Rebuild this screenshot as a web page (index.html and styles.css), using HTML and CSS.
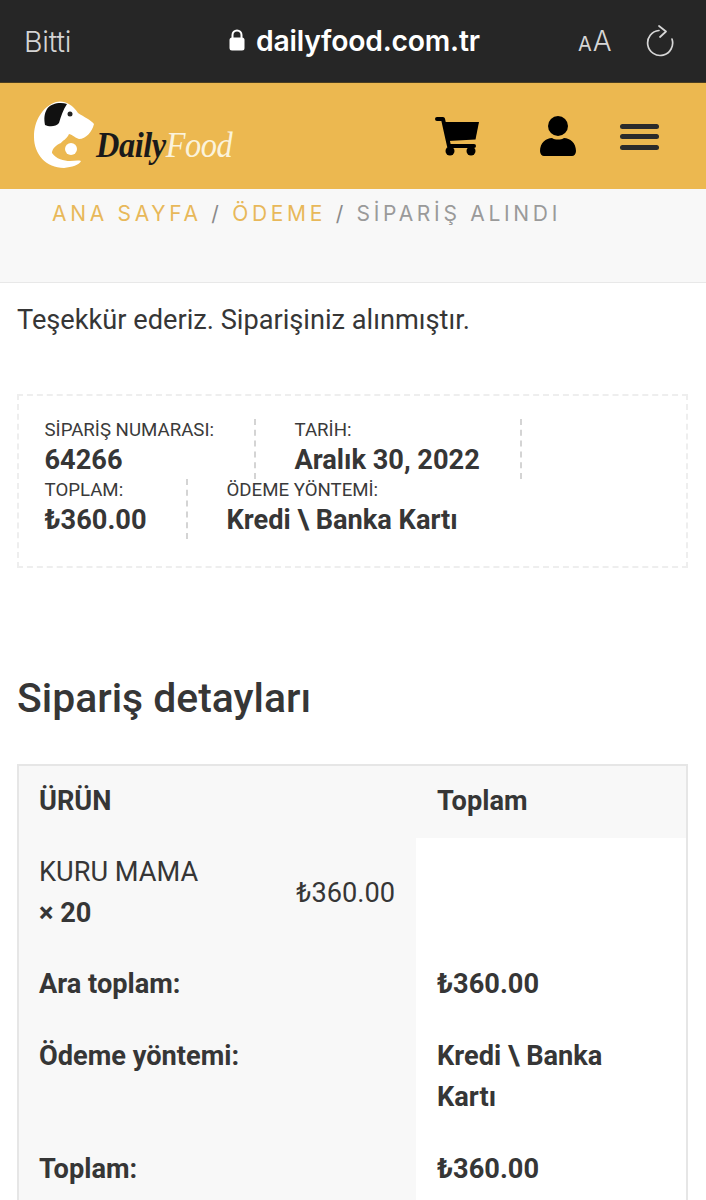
FILE: index.html
```html
<!DOCTYPE html>
<html lang="tr">
<head>
<meta charset="utf-8">
<title>DailyFood</title>
<link rel="stylesheet" href="styles.css">
</head>
<body>
<div class="browser-bar">
  <span class="done">Bitti</span>
  <div class="address">
    <svg class="lock" viewBox="0 0 16 22" width="16" height="22"><path d="M3.500 9V6a4.500 4.500 0 0 1 9 0v3" fill="none" stroke="#fff" stroke-width="2"/><rect x="0.500" y="8.500" width="15" height="13" rx="2.500" fill="#fff"/></svg>
    <span class="url">dailyfood.com.tr</span>
  </div>
  <div class="aa"><span class="aa-small">A</span><span class="aa-big">A</span></div>
  <svg class="reload" viewBox="0 0 28 32" width="28" height="32"><path d="M13 5.500A12.500 12.500 0 1 0 26 14" fill="none" stroke="#d6d6d6" stroke-width="1.700" stroke-linecap="round"/><path d="M13 1L20 6.500L14 12" fill="none" stroke="#d6d6d6" stroke-width="1.700" stroke-linecap="round" stroke-linejoin="round"/></svg>
</div>
<header class="site-header">
  <div class="logo">
    <svg class="logo-mark" viewBox="0 0 62 68" width="62" height="68">
      <path d="M22 1C30 -1 38 3 44 12C50 16 57 19 60 23C58 31 52 38 45 38C40 36 37 33 35 33C33 38 28 40 27 42C22 44 18 48 18 52C22 58 30 60 36 60C40 60 44 59 47 60C45 64 38 66 30 67C12 67 0 53 0 36C0 20 8 6 22 1Z" fill="#fff"/>
      <path d="M13 8C17 2 27 1 33 3C29 9 27 15 25 22C22 26 15 26 11 24C10 18 10 13 13 8Z" fill="#111"/>
      <circle cx="36" cy="13" r="2.500" fill="#222"/>
      <circle cx="37" cy="48" r="6" fill="#fff"/>
    </svg>
    <span class="logo-text"><span class="logo-daily">Daily</span><span class="logo-food">Food</span></span>
  </div>
  <nav class="header-icons">
    <svg class="icon-cart" viewBox="0 0 46 40" width="46" height="40"><path d="M3 3H9L15 30H40" fill="none" stroke="#000" stroke-width="4" stroke-linecap="round" stroke-linejoin="round"/><path d="M10 6H45L41.500 23.500L14 25Z" fill="#000"/><circle cx="16" cy="35" r="4.500" fill="#000"/><circle cx="37" cy="35" r="4.500" fill="#000"/></svg>
    <svg class="icon-user" viewBox="0 0 36 40" width="36" height="40"><circle cx="18" cy="10" r="10" fill="#000"/><path d="M0 35C0 27 6 22 12 22C15 24 21 24 24 22C30 22 36 27 36 35C36 38 34 40 32 40H4C2 40 0 38 0 35Z" fill="#000"/></svg>
    <div class="burger"><span></span><span></span><span></span></div>
  </nav>
</header>
<div class="crumbs">
  <a>ANA SAYFA</a> <i>/</i> <a>ÖDEME</a> <i>/</i> <span>SİPARİŞ ALINDI</span>
</div>
<main class="content">
  <p class="thanks">Teşekkür ederiz. Siparişiniz alınmıştır.</p>
  <section class="overview">
    <div class="ov-row">
      <div class="ov-item ov-number"><small>SİPARİŞ NUMARASI:</small><strong>64266</strong></div>
      <div class="ov-item ov-date"><small>TARİH:</small><strong>Aralık 30, 2022</strong></div>
    </div>
    <div class="ov-row ov-row-second">
      <div class="ov-item ov-total"><small>TOPLAM:</small><strong>₺360.00</strong></div>
      <div class="ov-item ov-method"><small>ÖDEME YÖNTEMİ:</small><strong>Kredi \ Banka Kartı</strong></div>
    </div>
  </section>
  <h2 class="details-title">Sipariş detayları</h2>
  <table class="details">
    <thead>
      <tr><th class="col-a">ÜRÜN</th><th class="col-b">Toplam</th></tr>
    </thead>
    <tbody>
      <tr>
        <td class="col-a product">
          <div class="product-inner">
            <span class="product-name">KURU MAMA<br><b>× 20</b></span>
            <span class="product-price">₺360.00</span>
          </div>
        </td>
        <td class="col-b"></td>
      </tr>
      <tr><th class="col-a">Ara toplam:</th><td class="col-b strong">₺360.00</td></tr>
      <tr><th class="col-a">Ödeme yöntemi:</th><td class="col-b strong">Kredi \ Banka Kartı</td></tr>
      <tr><th class="col-a">Toplam:</th><td class="col-b strong">₺360.00</td></tr>
    </tbody>
  </table>
</main>
</body>
</html>
```
FILE: styles.css
```css
* { box-sizing: border-box; }
html, body { margin: 0; padding: 0; height: 1200px; overflow: hidden; background: #fff; }
body { font-family: Roboto, "Liberation Sans", sans-serif; color: #363636; }

.browser-bar {
  height: 83px;
  background: #262626;
  display: flex;
  align-items: center;
  padding: 0 0 0 25px;
  font-family: Inter, "Liberation Sans", sans-serif;
  border-bottom: 1px solid #4a3d20;
}
.done { font-size: 28.500px; color: #d4d4d4; width: 204px; letter-spacing: -0.2px; font-weight: 300; margin-left: -1px; padding-left: 0; flex: 0 0 205px; }
.address { display: flex; align-items: center; gap: 11px; width: 349px; }
.lock { margin-top: -2px; }
.url { font-size: 28.300px; font-weight: 600; color: #fff; letter-spacing: -0.2px; }
.aa { color: #d6d6d6; display: flex; align-items: baseline; width: 68px; margin-top: -1px; }
.aa-small { font-size: 20px; margin-right: 1px; }
.aa-big { font-size: 28px; font-weight: 300; }

.site-header {
  height: 106px;
  background: #ecb850;
  display: flex;
  align-items: center;
  justify-content: space-between;
  padding: 0 47px 0 34px;
}
.logo { display: flex; align-items: flex-end; }
.logo-mark { display: block; margin-top: -3px; }
.logo-text {
  font-family: "Liberation Serif", serif;
  font-style: italic;
  font-size: 36px;
  line-height: 40px;
  margin-bottom: 4px;
  letter-spacing: -0.5px;
  transform: scaleX(0.9);
  transform-origin: left center;
  display: inline-block;
}
.logo-daily { color: #1a1a1a; font-weight: 700; }
.logo-food { color: #fbf3dc; }
.header-icons { display: flex; align-items: center; }
.icon-cart { margin-right: 60px; }
.icon-user { margin-right: 44px; }
.burger { display: flex; flex-direction: column; gap: 5.500px; width: 39px; margin-top: 1px; }
.burger span { display: block; height: 5px; border-radius: 3px; background: #2b2b2b; }

.crumbs {
  height: 94px;
  background: #f8f8f8;
  border-bottom: 1px solid #e8e8e8;
  padding: 12px 0 0 52px;
  font-family: Inter, "Liberation Sans", sans-serif;
  font-size: 21px;
  line-height: 26px;
  letter-spacing: 3.700px;
  color: #9a9a9a;
  white-space: nowrap;
}
.crumbs a { color: #e8b85a; }
.crumbs i { font-style: normal; color: #8a8a8a; }

.content { padding: 0 18px 0 17px; }
.thanks { margin: 0; padding-top: 20px; font-size: 27.200px; line-height: 34px; color: #363636; }

.overview {
  margin-top: 57px;
  height: 174px;
  border: 2px dashed #eeeeee;
  padding: 23px 0 0 25.500px;
  display: flex;
  flex-direction: column;
}
.ov-row { display: flex; height: 60px; }
.ov-item { display: flex; flex-direction: column; }
.ov-item small { font-size: 18.660px; line-height: 22px; color: #3a3a3a; white-space: nowrap; }
.ov-item strong { font-size: 27.200px; line-height: 38px; font-weight: 700; color: #363636; white-space: nowrap; }
.ov-number { width: 211px; border-right: 2px dashed #d4d4d4; }
.ov-date { width: 266px; padding-left: 39px; border-right: 2px dashed #d4d4d4; }
.ov-total { width: 143px; border-right: 2px dashed #d4d4d4; }
.ov-method { padding-left: 39px; }

.details-title { margin: 106px 0 0; font-size: 40.900px; line-height: 48px; font-weight: 500; color: #363636; }

.details {
  margin-top: 42px;
  width: 671px;
  border-collapse: collapse;
  border-top: 2px solid #e6e6e6;
  border-left: 2px solid #e6e6e6;
  border-right: 2px solid #e6e6e6;
  table-layout: fixed;
  font-size: 27.200px;
  line-height: 41px;
}
.details th, .details td { text-align: left; padding: 15px 21px 16px 20px; vertical-align: top; color: #363636; }
.details th { font-weight: 700; }
.col-a { width: 398px; background: #f8f8f8; }
.details .col-b { padding-left: 21px; padding-right: 50px; }
.details thead .col-b { background: #f8f8f8; }
.strong { font-weight: 700; }
.details .product { padding: 14px 21px 15px 20px; }
.product-inner { display: flex; justify-content: space-between; align-items: center; }
```
